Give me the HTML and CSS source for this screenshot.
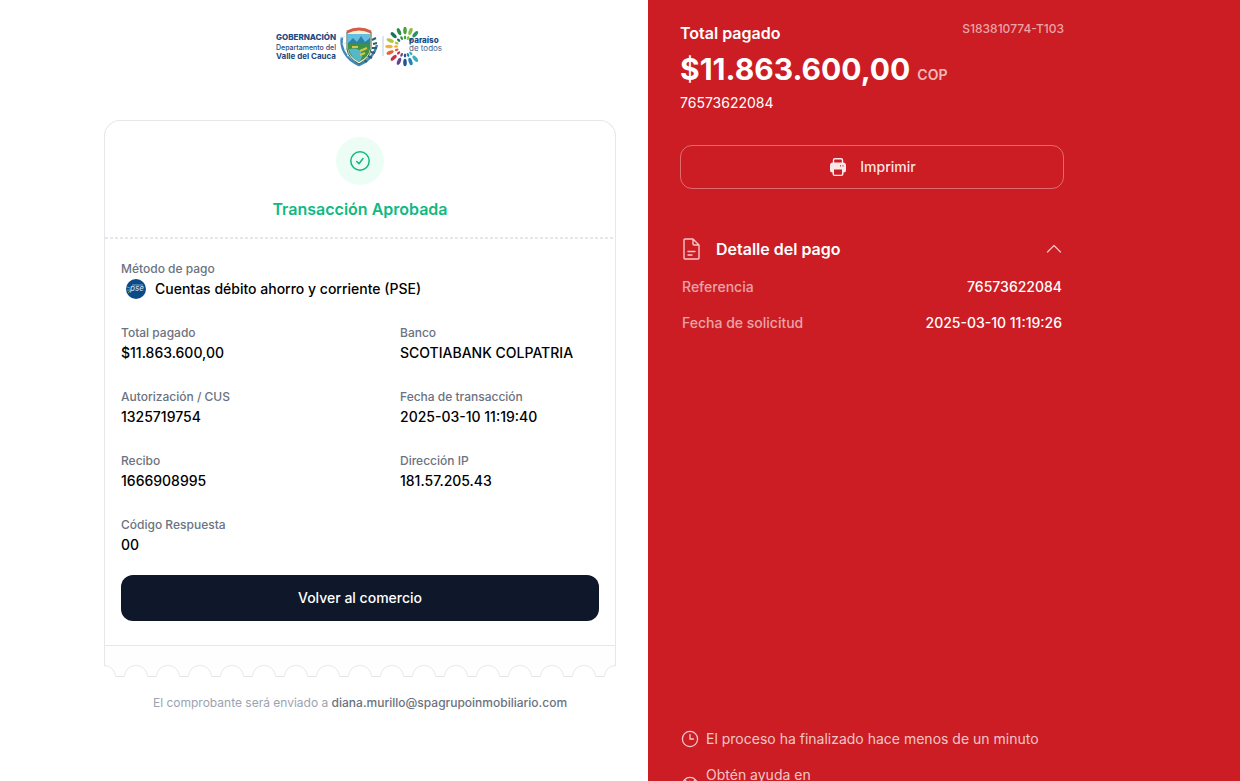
FILE: index.html
```html
<!DOCTYPE html>
<html lang="es">
<head>
    <meta charset="UTF-8">
    <meta name="viewport" content="width=device-width, initial-scale=1.0">
    <title>Transacción Aprobada</title>
    <link rel="stylesheet" href="styles.css">
</head>
<body>
    <div class="page">
        <main class="receipt-side">
            <div class="receipt">
                <header class="brand">
                    <svg class="logo" width="168" height="40" viewBox="0 0 168 40" role="img" aria-label="Gobernación Valle del Cauca">
                        <text class="logo-bold" x="0" y="13">GOBERNACIÓN</text>
                        <text class="logo-thin" x="0" y="23">Departamento del</text>
                        <text class="logo-mid" x="0" y="32">Valle del Cauca</text>

                        <!-- shield -->
                        <path d="M66 10c-2 10 3 22 17 28 10-4 16-12 18-20" fill="none" stroke="#3f86bd" stroke-width="2.5"/>
                        <path d="M65 11l4-2M66 17l4-1M68 23l3-1M71 29l3-2" stroke="#cfe3f0" stroke-width="1"/>
                        <path d="M96 13l4-2M97 17l4-1M96 21l5 0M95 25l4 1M92 29l4 2M88 33l3 2" stroke="#2d5f66" stroke-width="2"/>
                        <path d="M71 5q12-6 24 0v17q-1 9-12 15q-11-6-12-15z" fill="#f4f1d0" stroke="#335f55" stroke-width="1"/>
                        <path d="M72 7h22v10H72z" fill="#66bfe2"/>
                        <path d="M72 16l5-5 4 4 4-6 4 6 5-4v11H72z" fill="#2b83a0"/>
                        <path d="M72 17h22v5q-1 8-11 13q-10-5-11-13z" fill="#3d9247"/>
                        <path d="M73 22q9-2 12 3t-2 10q-8-4-10-13z" fill="#58b6c9"/>
                        <path d="M76 20h6M84 24l7-3M84 28l5-2" stroke="#d5c64b" stroke-width="2"/>
                        <path d="M71 5q12-6 24 0" fill="none" stroke="#d45b46" stroke-width="3"/>

                        <path d="M107 9v20" stroke="#b7cde0" stroke-width="1"/>

                        <!-- burst of petals -->
                        <defs>
                            <g id="petal">
                                <ellipse cx="0" cy="-16" rx="1.8" ry="3.800"/>
                                <ellipse cx="0" cy="-9" rx="1.2" ry="2"/>
                            </g>
                        </defs>
                        <g transform="translate(129 19.5)">
                            <use href="#petal" transform="rotate(40)" fill="#2a9263"/>
                            <use href="#petal" transform="rotate(20)" fill="#8cbd3e"/>
                            <use href="#petal" fill="#4aa13f"/>
                            <use href="#petal" transform="rotate(-22)" fill="#2f8a43"/>
                            <use href="#petal" transform="rotate(-45)" fill="#16745b"/>
                            <use href="#petal" transform="rotate(-68)" fill="#b4c43b"/>
                            <use href="#petal" transform="rotate(-90)" fill="#f0b33a"/>
                            <use href="#petal" transform="rotate(-112)" fill="#e5603b"/>
                            <use href="#petal" transform="rotate(-135)" fill="#c6304c"/>
                            <use href="#petal" transform="rotate(-158)" fill="#62468c"/>
                            <use href="#petal" transform="rotate(180)" fill="#215592"/>
                            <use href="#petal" transform="rotate(160)" fill="#2382b5"/>
                            <use href="#petal" transform="rotate(140)" fill="#39afc2"/>
                        </g>
                        <text class="logo-slogan" x="133" y="16">paraíso</text>
                        <text class="logo-slogan-thin" x="133" y="24">de todos</text>
                    </svg>
                </header>

                <section class="ticket">
                    <div class="ticket-head">
                        <div class="status-icon">
                            <svg width="24" height="24" viewBox="0 0 24 24" fill="none" stroke="currentColor" stroke-width="1.500" stroke-linecap="round" stroke-linejoin="round">
                                <circle cx="12" cy="12" r="9.200"/>
                                <path d="M8.700 12.500l2.300 2.300 4-5.300"/>
                            </svg>
                        </div>
                        <h1>Transacción Aprobada</h1>
                    </div>

                    <div class="ticket-body">
                        <dl class="fields">
                            <div class="field wide">
                                <dt>Método de pago</dt>
                                <dd class="method">
                                    <svg width="20" height="20" viewBox="0 0 20 20" aria-hidden="true">
                                        <circle cx="10" cy="10" r="10" fill="#0b4a86"/>
                                        <path d="M1 8l3 1M1 11h3M2 14l2-2" stroke="#8a9a62" stroke-width="1"/>
                                        <text class="pse" x="4" y="12">pse</text>
                                        <path d="M6 6h11" stroke="#7fa6c8" stroke-width="1"/>
                                    </svg>
                                    Cuentas débito ahorro y corriente (PSE)
                                </dd>
                            </div>
                            <div class="field">
                                <dt>Total pagado</dt>
                                <dd>$11.863.600,00</dd>
                            </div>
                            <div class="field">
                                <dt>Banco</dt>
                                <dd>SCOTIABANK COLPATRIA</dd>
                            </div>
                            <div class="field">
                                <dt>Autorización / CUS</dt>
                                <dd>1325719754</dd>
                            </div>
                            <div class="field">
                                <dt>Fecha de transacción</dt>
                                <dd>2025-03-10 11:19:40</dd>
                            </div>
                            <div class="field">
                                <dt>Recibo</dt>
                                <dd>1666908995</dd>
                            </div>
                            <div class="field">
                                <dt>Dirección IP</dt>
                                <dd>181.57.205.43</dd>
                            </div>
                            <div class="field">
                                <dt>Código Respuesta</dt>
                                <dd>00</dd>
                            </div>
                        </dl>
                        <button type="button" class="btn-back">Volver al comercio</button>
                    </div>
                    <div class="ticket-foot"></div>
                </section>
                <svg class="ticket-edge" width="100%" height="12" aria-hidden="true">
                    <defs>
                        <pattern id="edge" width="32" height="12" patternUnits="userSpaceOnUse">
                            <path d="M0 0H32V.5A11.500 11 0 0 0 20.500 11.500H11.500A11.500 11 0 0 0 0 .5z" fill="#fefefe"/>
                            <path d="M0 .5A11.500 11 0 0 1 11.500 11.500H20.500A11.500 11 0 0 1 32 .5" fill="none" stroke="#e5e7eb"/>
                        </pattern>
                    </defs>
                    <rect width="100%" height="12" fill="url(#edge)"/>
                </svg>

                <p class="sent-to">El comprobante será enviado a <span>diana.murillo@spagrupoinmobiliario.com</span></p>
            </div>
        </main>

        <aside class="summary-side">
            <div class="summary">
                <div class="summary-top">
                    <h2>Total pagado</h2>
                    <span class="code">S183810774-T103</span>
                </div>
                <p class="amount">$11.863.600,00 <small>COP</small></p>
                <p class="reference">76573622084</p>

                <button type="button" class="btn-print">
                    <svg width="20" height="20" viewBox="0 0 20 20" aria-hidden="true">
                        <path d="M5.500 6V3Q5.500 1.700 6.800 1.700H13.200Q14.500 1.700 14.500 3V6" fill="none" stroke="currentColor" stroke-width="1.400"/>
                        <path fill="currentColor" fill-rule="evenodd" d="M5 5.500h10q3 0 3 3V13q0 2.500-2.500 2.500V17q0 2-2 2h-7q-2 0-2-2v-1.500Q2 15.500 2 13V8.500q0-3 3-3zM6 12.500V17q0 .7.700.7h6.600q.7 0 .7-.7v-4.500zM12 8.300v1.300h1V8.300zM14.500 8.300v1.300h1V8.300z"/>
                    </svg>
                    Imprimir
                </button>

                <section class="detail">
                    <button type="button" class="detail-toggle" aria-expanded="true">
                        <svg width="20" height="24" viewBox="0 0 20 24" fill="none" stroke="currentColor" stroke-width="1.400" stroke-linecap="round" stroke-linejoin="round" aria-hidden="true">
                            <path d="M11 2H3Q2 2 2 3V21Q2 22 3 22H16Q17 22 17 21V8zM11 2V7Q11 8 12 8H17M6 14.500H13M6 18H10"/>
                        </svg>
                        <span>Detalle del pago</span>
                        <svg width="16" height="16" viewBox="0 0 16 16" fill="none" stroke="currentColor" stroke-width="1.200" stroke-linecap="round" stroke-linejoin="round" aria-hidden="true">
                            <path d="M1.500 11L8 4.500 14.500 11"/>
                        </svg>
                    </button>
                    <dl class="detail-list">
                        <div>
                            <dt>Referencia</dt>
                            <dd>76573622084</dd>
                        </div>
                        <div>
                            <dt>Fecha de solicitud</dt>
                            <dd>2025-03-10 11:19:26</dd>
                        </div>
                    </dl>
                </section>

                <footer class="notes">
                    <p>
                        <svg width="20" height="20" viewBox="0 0 20 20" fill="none" stroke="currentColor" stroke-width="1.300" stroke-linecap="round" aria-hidden="true">
                            <circle cx="10" cy="10" r="7.600"/>
                            <path d="M10 5.500V10H13.500"/>
                        </svg>
                        <span>El proceso ha finalizado hace menos de un minuto</span>
                    </p>
                    <p>
                        <svg width="20" height="20" viewBox="0 0 20 20" fill="none" stroke="currentColor" stroke-width="1.300" aria-hidden="true">
                            <circle cx="10" cy="10" r="7.600"/>
                            <circle cx="10" cy="10" r="3.500"/>
                            <path d="M4.600 4.600l3 3M15.400 4.600l-3 3M4.600 15.400l3-3M15.400 15.400l-3-3"/>
                        </svg>
                        <span>Obtén ayuda en</span>
                    </p>
                </footer>
            </div>
        </aside>
    </div>
</body>
</html>
```
FILE: styles.css
```css
* {
    box-sizing: border-box;
}
body {
    margin: 0;
    font-family: Inter, "Liberation Sans", sans-serif;
    font-size: 14px;
    line-height: 20px;
    color: #000;
    background: #fff;
}
h1, h2, p, dl, dd {
    margin: 0;
}
button {
    font: inherit;
    cursor: pointer;
}
svg {
    display: block;
    flex: none;
}
.page {
    display: grid;
    grid-template-columns: 81fr 74fr;
    height: 100vh;
    overflow-y: auto;
    scrollbar-width: none;
}

/* Receipt */
.receipt-side {
    display: flex;
    justify-content: flex-end;
    padding: 24px 32px;
}
.receipt {
    width: 100%;
    max-width: 512px;
}
.brand {
    display: flex;
    justify-content: center;
    height: 96px;
    padding-top: 3px;
}
.logo text {
    fill: #1d4a80;
}
.logo .logo-bold {
    font-size: 8px;
    font-weight: 800;
}
.logo .logo-thin {
    font-size: 7px;
    font-weight: 500;
}
.logo .logo-mid {
    font-size: 8px;
    font-weight: 700;
}
.logo .logo-slogan {
    font-size: 8px;
    font-weight: 800;
}
.logo .logo-slogan-thin {
    font-size: 8px;
    font-weight: 400;
    fill: #44698f;
}
.ticket {
    border: 1px solid #e5e7eb;
    border-bottom: 0;
    border-radius: 16px 16px 0 0;
}
.ticket-head {
    display: flex;
    flex-direction: column;
    align-items: center;
    gap: 12px;
    padding: 16px 16px 18px;
    background: repeating-linear-gradient(to right, #e5e7eb 0 3px, transparent 3px 5px) bottom / 100% 2px no-repeat;
}
.status-icon {
    display: grid;
    place-items: center;
    width: 48px;
    height: 48px;
    border-radius: 50%;
    background: #ecfdf5;
    color: #10b981;
}
.ticket-head h1 {
    font-size: 16px;
    line-height: 24px;
    font-weight: 600;
    color: #10b981;
}
.ticket-body {
    padding: 22px 16px 24px;
}
.fields {
    display: grid;
    grid-template-columns: 1fr 1fr;
    gap: 24px 80px;
}
.wide {
    grid-column: 1 / -1;
}
.field dt {
    font-size: 12px;
    line-height: 16px;
    font-weight: 500;
    color: #6b7280;
}
.field dd {
    line-height: 24px;
    font-weight: 500;
}
.field .method {
    display: flex;
    align-items: center;
    gap: 9px;
    padding-left: 5px;
}
.pse {
    font-size: 8px;
    font-style: italic;
    font-weight: 500;
    fill: #c5dcef;
}
.btn-back {
    display: block;
    width: 100%;
    height: 46px;
    margin-top: 18px;
    border: 0;
    border-radius: 12px;
    background: #0f172a;
    color: #fff;
    font-weight: 500;
}
.ticket-foot {
    height: 20px;
    border-top: 1px solid #e5e7eb;
    background: #fefefe;
}
.sent-to {
    margin-top: 16px;
    text-align: center;
    font-size: 12px;
    color: #9ca3af;
}
.sent-to span {
    font-weight: 500;
    color: #6b7280;
}

/* Summary */
.summary-side {
    min-height: calc(100vh + 56px);
    padding: 19px 32px 32px;
    background: #cc1d24;
    color: #fff;
}
.summary {
    display: flex;
    flex-direction: column;
    height: 100%;
    max-width: 384px;
}
.summary-top {
    display: flex;
    justify-content: space-between;
    align-items: flex-start;
}
.summary-top h2 {
    font-size: 16px;
    line-height: 28px;
    font-weight: 600;
}
.code {
    font-size: 12px;
    font-weight: 500;
    color: rgba(255, 255, 255, 0.6);
}
.amount {
    font-size: 30px;
    line-height: 44px;
    font-weight: 700;
}
.amount small {
    font-size: 14px;
    line-height: 20px;
    font-weight: 600;
    color: rgba(255, 255, 255, 0.7);
}
.reference {
    line-height: 24px;
    font-weight: 400;
}
.btn-print {
    display: flex;
    justify-content: center;
    align-items: center;
    gap: 12px;
    height: 44px;
    margin-top: 30px;
    border: 1px solid rgba(255, 255, 255, 0.35);
    border-radius: 12px;
    background: transparent;
    color: rgba(255, 255, 255, 0.9);
    font-weight: 500;
}
.detail {
    margin-top: 48px;
    padding: 0 2px;
}
.detail-toggle {
    display: flex;
    align-items: center;
    gap: 14px;
    width: 100%;
    padding: 0;
    border: 0;
    background: none;
    color: rgba(255, 255, 255, 0.75);
}
.detail-toggle span {
    flex: 1;
    text-align: left;
    font-size: 16px;
    line-height: 24px;
    font-weight: 600;
    color: #fff;
}
.detail-list {
    display: grid;
    gap: 16px;
    margin-top: 16px;
}
.detail-list div {
    display: flex;
    justify-content: space-between;
}
.detail-list dt {
    font-weight: 500;
    color: rgba(255, 255, 255, 0.6);
}
.detail-list dd {
    font-weight: 500;
}
.notes {
    display: grid;
    gap: 16px;
    margin-top: auto;
    color: rgba(255, 255, 255, 0.75);
    font-weight: 400;
}
.notes p {
    display: flex;
    align-items: center;
    gap: 6px;
}
.notes p:last-child {
    min-height: 40px;
}
.notes p:last-child span {
    align-self: flex-start;
}
```
